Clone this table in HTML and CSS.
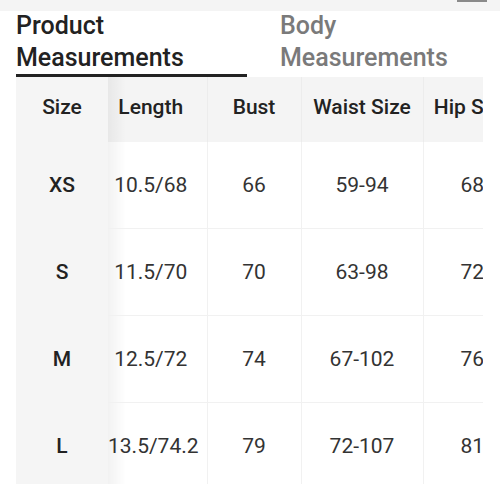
FILE: index.html
```html
<!DOCTYPE html>
<html>
<head>
<meta charset="utf-8">
<link rel="stylesheet" href="styles.css">
</head>
<body>
<div class="topbar"><span class="handle"></span></div>
<div class="tabs">
  <div class="tab active">Product<br>Measurements</div>
  <div class="tab">Body<br>Measurements</div>
</div>
<div class="scroller">
  <table class="sizes">
    <colgroup>
      <col class="c-size"><col class="c-len"><col class="c-bust"><col class="c-waist"><col class="c-hip">
    </colgroup>
    <thead>
      <tr><th class="first">Size</th><th class="shadowed">Length</th><th>Bust</th><th>Waist Size</th><th>Hip Size</th></tr>
    </thead>
    <tbody>
      <tr><td class="first">XS</td><td class="shadowed">10.5/68</td><td>66</td><td>59-94</td><td>68</td></tr>
      <tr><td class="first">S</td><td class="shadowed">11.5/70</td><td>70</td><td>63-98</td><td>72</td></tr>
      <tr><td class="first">M</td><td class="shadowed">12.5/72</td><td>74</td><td>67-102</td><td>76</td></tr>
      <tr><td class="first">L</td><td class="shadowed">13.5/74.2</td><td>79</td><td>72-107</td><td>81</td></tr>
    </tbody>
  </table>
</div>
</body>
</html>
```

FILE: styles.css
```css
html, body {
  margin: 0;
  padding: 0;
  background: #fff;
  font-family: Roboto, "Liberation Sans", sans-serif;
  overflow: hidden;
}
.topbar {
  height: 11px;
  background: #f4f4f4;
  position: relative;
}
.handle {
  position: absolute;
  left: 457px;
  top: 0;
  width: 30px;
  height: 2px;
  background: #8a8a8a;
}
.tabs {
  display: flex;
  padding-left: 16px;
  height: 66px;
}
.tab {
  font-size: 25px;
  font-weight: 500;
  line-height: 32px;
  color: #7a7a7a;
  margin-top: -1px;
}
.tab.active {
  color: #222;
  width: 231px;
  border-bottom: 3px solid #222;
  height: 64px;
  margin-right: 33px;
}
.scroller {
  margin-left: 16px;
  width: 467px;
  overflow: hidden;
}
.sizes {
  border-collapse: collapse;
  table-layout: fixed;
  width: 505px;
}
.c-size { width: 92px; }
.c-len { width: 99px; }
.c-bust { width: 94px; }
.c-waist { width: 122px; }
.c-hip { width: 98px; }
.sizes th {
  height: 59px;
  padding: 0 0 6px 0;
  background: #f4f4f4;
  font-size: 21px;
  font-weight: 500;
  color: #222;
  text-align: center;
  white-space: nowrap;
  border-left: 1px solid #ececec;
}
.sizes td {
  height: 85px;
  padding: 0 0 1px 0;
  font-size: 21px;
  color: #333;
  text-align: center;
  white-space: nowrap;
  border-top: 1px solid #f1f1f1;
  border-left: 1px solid #f1f1f1;
}
.sizes .first {
  background: #f5f5f5;
  font-weight: 500;
  color: #222;
  border-left: none;
}
.sizes td.first {
  border-top: 1px solid #f5f5f5;
}
.sizes .shadowed {
  border-left: none;
  padding-right: 13px;
  background-image: linear-gradient(to right, rgba(0,0,0,0.05), rgba(0,0,0,0) 18px);
}
.sizes tbody tr:first-child td {
  border-top: none;
}
```
